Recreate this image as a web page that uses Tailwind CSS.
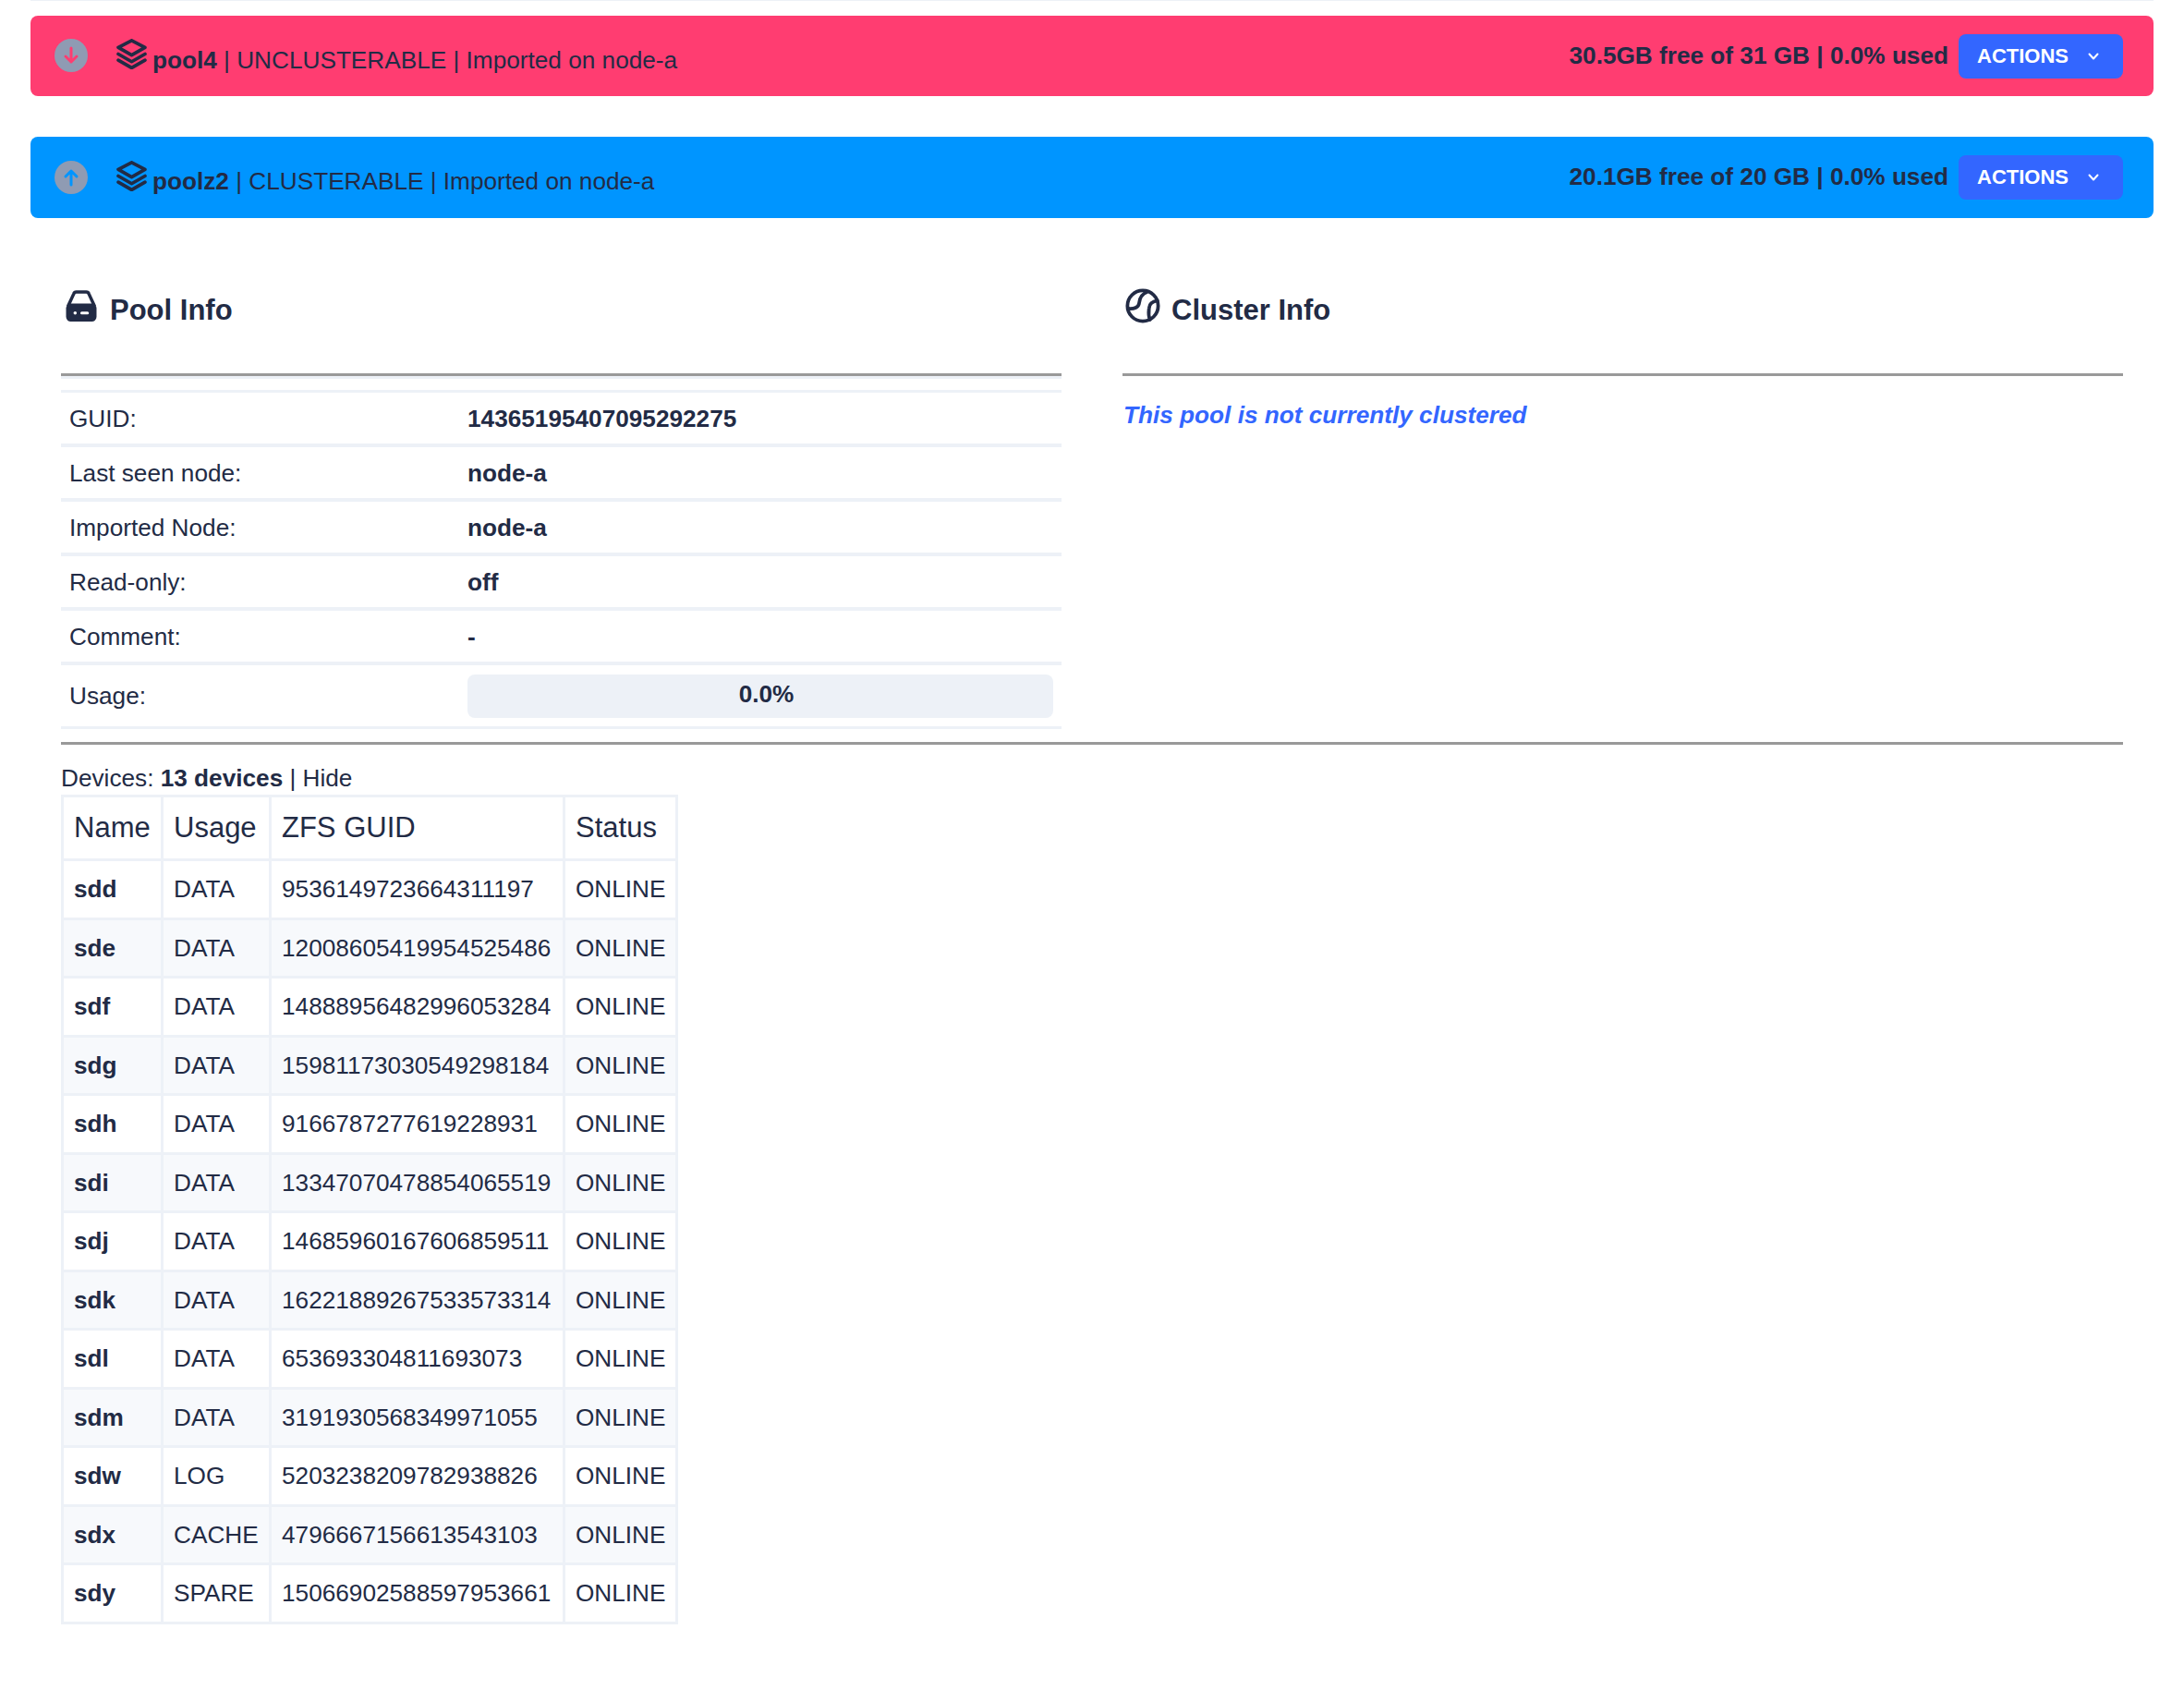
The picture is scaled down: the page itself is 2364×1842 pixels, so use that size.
<!DOCTYPE html>
<html lang="en">
<head>
  <meta charset="UTF-8" />
  <title>Pools</title>
  <script src="https://cdn.jsdelivr.net/npm/@tailwindcss/browser@4"></script>
</head>
<body class="bg-white text-[#222b45] font-['Liberation_Sans',Arial,sans-serif] text-[26.2px] leading-[38px]">
<div class="mx-[33px] h-[1px] bg-[#edf1f7]"></div>
<div class="px-[33px] pt-[16px] pb-[87px]">

  <!-- pool4 -->
  <div class="h-[87px] rounded-[8px] bg-[#ff3d71] flex items-center pl-[26px] pr-[33px]">
    <svg class="w-[36px] h-[36px] mr-[31px] -mt-[1px]" viewBox="0 0 36 36" fill="none" stroke="#ff3d71" stroke-width="3" stroke-linecap="round" stroke-linejoin="round"><circle cx="18" cy="18" r="18" fill="#8f9bb3" stroke="none"/><path d="M18 10v15M12 19l6 6 6-6"/></svg>
    <svg class="w-[33px] h-[33px] mr-[6px] -mt-[4px]" viewBox="0 0 32 32" fill="none" stroke="#222b45" stroke-width="3.6" stroke-linecap="round" stroke-linejoin="round"><path d="M16 1.8 30 9l-14 8L2 9z"/><path d="M2 16l14 8 14-8"/><path d="M2 22.5l14 8 14-8"/></svg>
    <div class="mt-[8px]"><b>pool4</b> | UNCLUSTERABLE | Imported on node-a</div>
    <div class="ml-auto font-bold mr-[11px] -mt-[2px]">30.5GB free of 31 GB | 0.0% used</div>
    <button class="w-[178px] h-[48px] rounded-[8px] bg-[#3366ff] text-white font-bold text-[22px] flex items-center pl-[20px]">ACTIONS
      <svg class="w-[12px] h-[8px] ml-[21px]" viewBox="0 0 12 8" fill="none" stroke="white" stroke-width="2" stroke-linecap="round" stroke-linejoin="round"><path d="M1.5 1.5 6 6.5l4.5-5"/></svg>
    </button>
  </div>

  <!-- poolz2 -->
  <div class="h-[88px] mt-[44px] rounded-[8px] bg-[#0095ff] flex items-center pl-[26px] pr-[33px]">
    <svg class="w-[36px] h-[36px] mr-[31px] -mt-[1px]" viewBox="0 0 36 36" fill="none" stroke="#0095ff" stroke-width="3" stroke-linecap="round" stroke-linejoin="round"><circle cx="18" cy="18" r="18" fill="#8f9bb3" stroke="none"/><path d="M18 26V11M12 17l6-6 6 6"/></svg>
    <svg class="w-[33px] h-[33px] mr-[6px] -mt-[4px]" viewBox="0 0 32 32" fill="none" stroke="#222b45" stroke-width="3.6" stroke-linecap="round" stroke-linejoin="round"><path d="M16 1.8 30 9l-14 8L2 9z"/><path d="M2 16l14 8 14-8"/><path d="M2 22.5l14 8 14-8"/></svg>
    <div class="mt-[8px]"><b>poolz2</b> | CLUSTERABLE | Imported on node-a</div>
    <div class="ml-auto font-bold mr-[11px] -mt-[2px]">20.1GB free of 20 GB | 0.0% used</div>
    <button class="w-[178px] h-[48px] rounded-[8px] bg-[#3366ff] text-white font-bold text-[22px] flex items-center pl-[20px]">ACTIONS
      <svg class="w-[12px] h-[8px] ml-[21px]" viewBox="0 0 12 8" fill="none" stroke="white" stroke-width="2" stroke-linecap="round" stroke-linejoin="round"><path d="M1.5 1.5 6 6.5l4.5-5"/></svg>
    </button>
  </div>

  <div class="px-[33px]">
    <div class="grid grid-cols-2 gap-x-[66px]">

      <!-- Pool info -->
      <div>
        <div class="h-[171px] pt-[77px] border-b-[3px] border-[#999999] flex items-start">
          <svg class="w-[34px] h-[34px] ml-[5px] mr-[14px] mt-[1px]" viewBox="0 0 32 33"><path d="M2 17 8 4a3 3 0 0 1 3-2h10a3 3 0 0 1 3 2l6 13" fill="none" stroke="#222b45" stroke-width="3.4"/><rect y="14" width="32" height="19" rx="5" fill="#222b45"/><circle cx="9.5" cy="24" r="1.7" fill="#fff"/><rect x="15" y="22.5" width="9" height="3" rx="1.5" fill="#fff"/></svg>
          <h2 class="font-bold text-[31px] leading-[40px] mt-[3px]">Pool Info</h2>
        </div>
        <div class="h-[3px] bg-[#edf1f7]"></div>
        <div class="mt-[12px] border-t-[3px] border-[#edf1f7]">
          <div class="h-[59px] border-b-[4px] border-[#edf1f7] flex items-center pl-[9px]"><span class="w-[431px]">GUID:</span><b>14365195407095292275</b></div>
          <div class="h-[59px] border-b-[4px] border-[#edf1f7] flex items-center pl-[9px]"><span class="w-[431px]">Last seen node:</span><b>node-a</b></div>
          <div class="h-[59px] border-b-[4px] border-[#edf1f7] flex items-center pl-[9px]"><span class="w-[431px]">Imported Node:</span><b>node-a</b></div>
          <div class="h-[59px] border-b-[4px] border-[#edf1f7] flex items-center pl-[9px]"><span class="w-[431px]">Read-only:</span><b>off</b></div>
          <div class="h-[59px] border-b-[4px] border-[#edf1f7] flex items-center pl-[9px]"><span class="w-[431px]">Comment:</span><b>-</b></div>
          <div class="h-[69px] border-b-[3px] border-[#edf1f7] flex items-center pl-[9px] pr-[9px]">
            <span class="w-[431px] shrink-0">Usage:</span>
            <div class="flex-1 h-[47px] rounded-[8px] bg-[#edf1f7] flex items-center justify-center font-bold pl-[13px] pb-[5px]">0.0%</div>
          </div>
        </div>
      </div>

      <!-- Cluster info -->
      <div>
        <div class="h-[171px] pt-[77px] border-b-[3px] border-[#999999] flex items-start">
          <svg class="w-[38px] h-[38px] ml-[3px] mr-[12px] -mt-[1px]" viewBox="0 0 24 24" fill="none" stroke="#222b45" stroke-width="2.4" stroke-linecap="round"><circle cx="12" cy="12" r="10.5"/><path d="M14.9 2.5C11 4 9.8 7 9.5 10 9.2 13 6 14.3 2 13.9"/><path d="M22 8.5C18.5 9 16.5 11 16.3 13.5 16 16 15.5 18 16.9 21.5"/></svg>
          <h2 class="font-bold text-[31px] leading-[40px] mt-[3px]">Cluster Info</h2>
        </div>
        <p class="mt-[23px] ml-[1px] font-bold italic text-[#3366ff]">This pool is not currently clustered</p>
      </div>
    </div>

    <div class="mt-[14px] border-t-[3px] border-[#999999]"></div>

    <div class="mt-[17px] h-[38px]">Devices: <b>13 devices</b> | Hide</div>

    <table class="table-fixed w-[665px] -mt-[1px]">
      <colgroup><col class="w-[108px]" /><col class="w-[117px]" /><col class="w-[318px]" /><col class="w-[122px]" /></colgroup>
      <thead>
        <tr class="h-[69px] text-[31px] text-left">
          <th class="font-normal border-[3px] border-[#edf1f7] px-[11px]">Name</th>
          <th class="font-normal border-[3px] border-[#edf1f7] px-[11px]">Usage</th>
          <th class="font-normal border-[3px] border-[#edf1f7] px-[11px]">ZFS GUID</th>
          <th class="font-normal border-[3px] border-[#edf1f7] px-[11px]">Status</th>
        </tr>
      </thead>
      <tbody class="[&_td]:border-[3px] [&_td]:border-[#edf1f7] [&_td]:px-[11px] [&_td]:whitespace-nowrap [&_tr]:h-[63.5px] [&_tr:nth-child(odd)]:bg-white [&_tr:nth-child(even)]:bg-[#f7f9fc]">
        <tr><td><b>sdd</b></td><td>DATA</td><td>9536149723664311197</td><td>ONLINE</td></tr>
        <tr><td><b>sde</b></td><td>DATA</td><td>12008605419954525486</td><td>ONLINE</td></tr>
        <tr><td><b>sdf</b></td><td>DATA</td><td>14888956482996053284</td><td>ONLINE</td></tr>
        <tr><td><b>sdg</b></td><td>DATA</td><td>15981173030549298184</td><td>ONLINE</td></tr>
        <tr><td><b>sdh</b></td><td>DATA</td><td>9166787277619228931</td><td>ONLINE</td></tr>
        <tr><td><b>sdi</b></td><td>DATA</td><td>13347070478854065519</td><td>ONLINE</td></tr>
        <tr><td><b>sdj</b></td><td>DATA</td><td>14685960167606859511</td><td>ONLINE</td></tr>
        <tr><td><b>sdk</b></td><td>DATA</td><td>16221889267533573314</td><td>ONLINE</td></tr>
        <tr><td><b>sdl</b></td><td>DATA</td><td>653693304811693073</td><td>ONLINE</td></tr>
        <tr><td><b>sdm</b></td><td>DATA</td><td>3191930568349971055</td><td>ONLINE</td></tr>
        <tr><td><b>sdw</b></td><td>LOG</td><td>5203238209782938826</td><td>ONLINE</td></tr>
        <tr><td><b>sdx</b></td><td>CACHE</td><td>4796667156613543103</td><td>ONLINE</td></tr>
        <tr><td><b>sdy</b></td><td>SPARE</td><td>15066902588597953661</td><td>ONLINE</td></tr>
      </tbody>
    </table>
  </div>
</div>
</body>
</html>
